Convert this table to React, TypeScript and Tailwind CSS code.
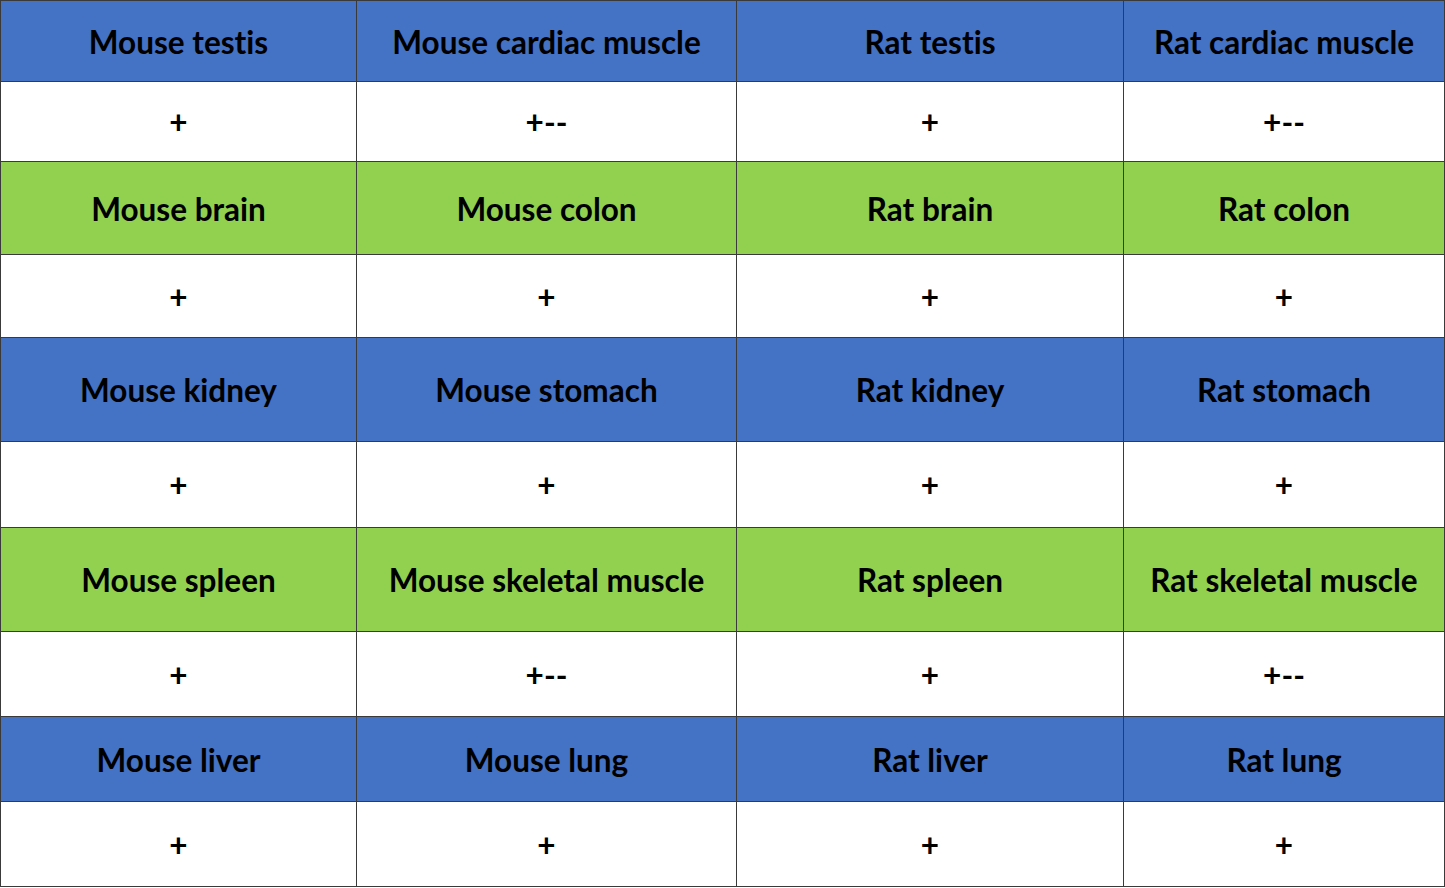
const rows: { kind: 'blue' | 'green' | 'white'; h: string; cells: string[] }[] = [
  { kind: 'blue', h: 'h-[81px]', cells: ['Mouse testis', 'Mouse cardiac muscle', 'Rat testis', 'Rat cardiac muscle'] },
  { kind: 'white', h: 'h-[80px]', cells: ['+', '+--', '+', '+--'] },
  { kind: 'green', h: 'h-[93px]', cells: ['Mouse brain', 'Mouse colon', 'Rat brain', 'Rat colon'] },
  { kind: 'white', h: 'h-[83px]', cells: ['+', '+', '+', '+'] },
  { kind: 'blue', h: 'h-[104px]', cells: ['Mouse kidney', 'Mouse stomach', 'Rat kidney', 'Rat stomach'] },
  { kind: 'white', h: 'h-[86px]', cells: ['+', '+', '+', '+'] },
  { kind: 'green', h: 'h-[104px]', cells: ['Mouse spleen', 'Mouse skeletal muscle', 'Rat spleen', 'Rat skeletal muscle'] },
  { kind: 'white', h: 'h-[85px]', cells: ['+', '+--', '+', '+--'] },
  { kind: 'blue', h: 'h-[85px]', cells: ['Mouse liver', 'Mouse lung', 'Rat liver', 'Rat lung'] },
  { kind: 'white', h: 'h-[85px]', cells: ['+', '+', '+', '+'] },
];

const bg = {
  blue: 'bg-[#4472c4]',
  green: 'bg-[#92d050]',
  white: 'bg-white',
};

const App = () => {
  return (
    <div className="w-[1445px] bg-white font-['Lato','Liberation_Sans',sans-serif] font-bold text-black [font-variant-ligatures:none]">
      <div className="grid grid-cols-[356px_380px_387px_321px] border-l border-t border-[#3a3a3a]">
        {rows.map((row, i) =>
          row.cells.map((text, j) => (
            <div
              key={`${i}-${j}`}
              className={`${row.h} ${bg[row.kind]} flex items-center justify-center border-r border-b border-[#3a3a3a] pt-[3px] text-[31.5px] leading-none`}
            >
              {text}
            </div>
          ))
        )}
      </div>
    </div>
  );
};

export default App;
